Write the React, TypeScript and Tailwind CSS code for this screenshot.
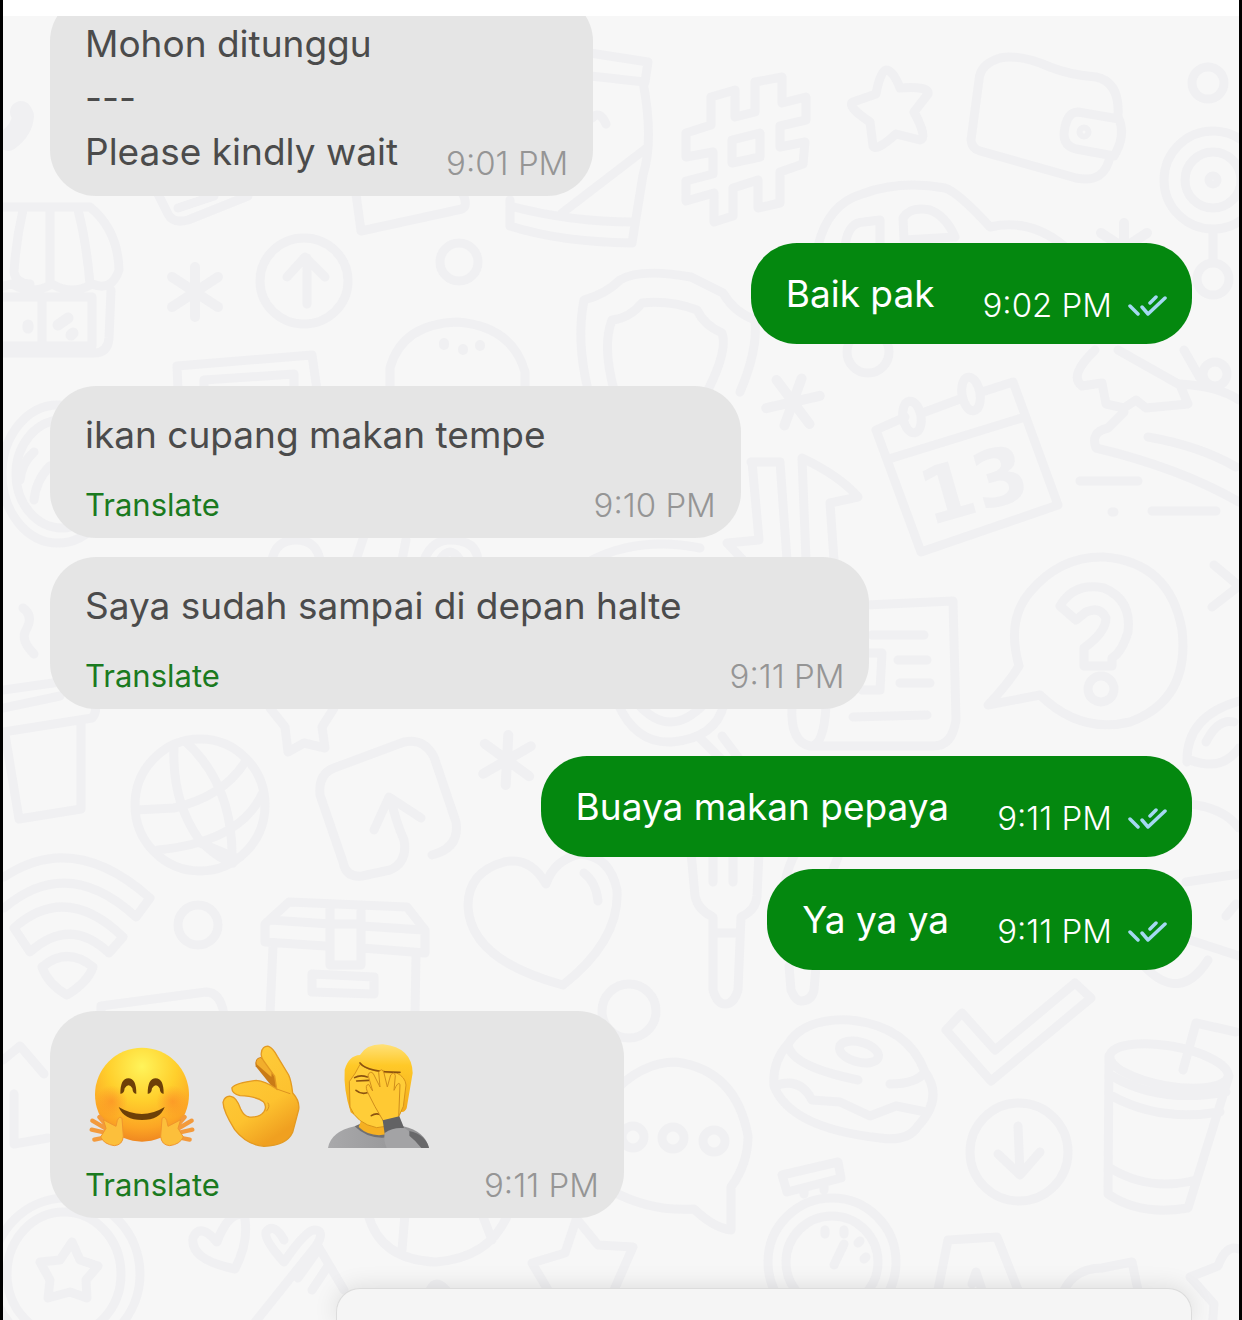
import React from 'react';
import clsx from 'clsx';

type Message = {
  id: number;
  from: 'driver' | 'me';
  lines?: string[];
  time: string;
  translate?: boolean;
  spacing: string;
};

const messages: Message[] = [
  { id: 1, from: 'driver', lines: ['Mohon ditunggu', '---', 'Please kindly wait'], time: '9:01 PM', spacing: '-mt-[21px]' },
  { id: 2, from: 'me', lines: ['Baik pak'], time: '9:02 PM', spacing: 'mt-[47px]' },
  { id: 3, from: 'driver', lines: ['ikan cupang makan tempe'], time: '9:10 PM', translate: true, spacing: 'mt-[42px]' },
  { id: 4, from: 'driver', lines: ['Saya sudah sampai di depan halte'], time: '9:11 PM', translate: true, spacing: 'mt-[19px]' },
  { id: 5, from: 'me', lines: ['Buaya makan pepaya'], time: '9:11 PM', spacing: 'mt-[47px]' },
  { id: 6, from: 'me', lines: ['Ya ya ya'], time: '9:11 PM', spacing: 'mt-3' },
  { id: 7, from: 'driver', time: '9:11 PM', translate: true, spacing: 'mt-[41px]' },
];

function Asterisk({ x, y, turn = 0 }: { x: number; y: number; turn?: number }) {
  return (
    <path
      transform={`translate(${x} ${y}) rotate(${turn})`}
      d="M0-25V25M-23-15L23 15M-23 15L23-15"
      strokeWidth="10"
    />
  );
}

function Wallpaper() {
  return (
    <svg
      aria-hidden="true"
      viewBox="0 0 1236 1304"
      preserveAspectRatio="xMinYMin slice"
      className="absolute inset-0 w-full h-full"
      fill="none"
      stroke="#f0f0f2"
      strokeWidth="9"
      strokeLinecap="round"
      strokeLinejoin="round"
    >
      <g transform="translate(-3 -16)">
        {/* Shop */}
        <path d="M3 207H90Q118 230 119 270Q112 292 92 284Q72 296 52 284Q32 296 12 284L3 286M23 210Q16 240 14 272Q16 284 30 284M50 210V284M78 210Q86 240 90 284M111 290L109 338Q108 353 94 353H3M3 297H92V346H3M42 297V346" />
        <path d="M28 325V328M58 325L68 318M71 335L73 333" strokeWidth="11" />
        <path d="M21 112L23 116Q22 130 8 140" strokeWidth="22" />

        {/* Cards and can behind the first bubble */}
        <path d="M158 194L168 214Q173 224 188 220L248 196M178 208L214 196" />
        <path d="M356 194L361 231L462 209Q468 206 463 194" />
        <path d="M590 53L648 62L645 82L590 76M643 82Q654 140 643 175L632 243Q560 242 510 226V200M510 206Q570 222 634 222M562 213L648 147M606 124Q600 110 592 118" />

        <Asterisk x={195} y={292} />
        <ellipse cx="304" cy="281" rx="44" ry="43" />
        <path d="M307 304V258M287 277L305 257L325 277" />
        <circle cx="459" cy="262" r="19" />
        <path d="M390 386V368Q402 324 457 322Q512 326 525 372V386" />
        <path d="M444 343V345M463 349V350M480 345V346" strokeWidth="10" />
        <path d="M178 390L177 366L312 355L317 390M204 390V380L294 374V390" />

        {/* Shield */}
        <path d="M588 390Q576 340 584 300Q606 294 620 280Q640 268 691 277L723 293Q734 312 755 320Q758 350 740 392" />
        <path d="M614 390Q602 345 612 320Q630 318 642 303Q670 300 697 310Q704 325 722 333Q728 350 708 390" />

        {/* Hash */}
        <path d="M711 97L735 90V117L755 112V82L782 77V103L806 97V120L780 126V147L805 142L803 164L780 172V203L758 208V180L733 188V216L714 222V193L686 201V181L713 174V152L686 157V133L711 125ZM732 140L760 133V157L732 163Z" />
        <path d="M886 70Q893 70 900 88Q930 86 928 94L914 112Q928 138 920 140L896 134Q876 152 873 146L870 122Q846 106 853 102L876 94Q880 72 886 70Z" />

        {/* Wallet */}
        <path d="M1118 116Q1120 82 1096 77Q1070 75 1050 67Q1020 54 1000 58Q980 64 979 80L971 140Q972 149 980 151L1076 178Q1105 184 1110 156" />
        <path d="M1119 119L1078 112Q1066 112 1064 134Q1064 146 1076 149L1114 156Q1126 136 1119 119Z" />
        <circle cx="1084" cy="132" r="3" />

        <circle cx="1208" cy="83" r="16" />
        <circle cx="1213" cy="180" r="49" />
        <circle cx="1213" cy="180" r="28" />
        <circle cx="1213" cy="180" r="4" />
        <path d="M1213 230V262" />
        <circle cx="1213" cy="279" r="16" />

        {/* Car */}
        <path d="M818 246Q828 204 862 194Q900 180 945 188Q958 192 990 227Q1030 218 1064 246M845 246Q848 222 864 222L880 220V246M904 240L903 218Q910 206 930 210Q946 216 955 237Z" />
        <Asterisk x={1124} y={248} />

        <circle cx="868" cy="352" r="21" />
        <Asterisk x={793} y={402} turn={20} />

        {/* Transfer arrows */}
        <path d="M751 462H780L787 560M752 462L759 540L727 543L745 562M806 560L802 458Q840 476 858 497L830 503L834 560" />

        {/* Calendar */}
        <path d="M905 417L876 430L921 552L1058 505L1013 382L985 391M925 412L960 399M892 458L1025 417" />
        <ellipse cx="912" cy="417" rx="9" ry="16" transform="rotate(-10 912 417)" />
        <ellipse cx="971" cy="394" rx="9" ry="17" transform="rotate(-10 971 394)" />
        <text
          x="974"
          y="512"
          transform="rotate(-16 974 486)"
          textAnchor="middle"
          fontSize="78"
          fontWeight="600"
          fontFamily="DejaVu Sans, sans-serif"
          fill="#f0f0f2"
          stroke="none"
        >
          13
        </text>

        {/* Dinosaur */}
        <path d="M1095 350Q1068 376 1082 386L1102 383L1106 404L1124 408L1136 400L1146 408L1188 404L1180 385L1118 350M1124 412L1108 428Q1090 432 1096 448Q1180 468 1239 502M1148 437Q1200 446 1236 467M1184 350L1200 378M1180 384Q1218 386 1239 400" />
        <circle cx="1215" cy="374" r="12" />
        <path d="M1080 481H1138M1152 511H1216M1112 512H1114" />

        {/* Question bubble */}
        <path d="M1019 666Q1006 620 1030 592Q1060 556 1104 557Q1170 562 1182 630Q1190 700 1130 722Q1080 734 1040 695L988 705Q1008 684 1019 666Z" />
        <path d="M1060 606Q1074 582 1104 588Q1132 600 1128 632Q1122 652 1112 658V666H1084V648Q1106 632 1106 618Q1100 606 1086 612L1076 620Z" />
        <circle cx="1101" cy="689" r="13" />
        <path d="M1214 565L1239 586L1212 607" />
        <path d="M1187 762Q1186 716 1239 701M1206 742Q1218 718 1234 722M1190 760Q1222 772 1239 748" />

        {/* Newspaper */}
        <path d="M866 605L953 601L956 720Q952 746 934 746H810Q790 742 792 706M826 706Q824 744 812 746M872 635H924M898 660H927M900 683H930M853 717L927 715M870 653H882L880 690H862" />
        <path d="M618 704Q636 744 672 742Q716 738 724 704M638 704Q670 740 704 704M700 738L724 762M722 736L740 760" />
        <path d="M272 560Q276 540 296 540Q316 540 320 560M356 560L364 536M402 560L406 540M424 560Q432 540 450 540Q476 540 478 560M440 560Q450 544 460 560M592 560Q640 536 700 548" />

        {/* Left edge */}
        <ellipse cx="58" cy="474" rx="56" ry="69" />
        <ellipse cx="62" cy="474" rx="46" ry="54" />
        <path d="M20 480Q22 462 34 452M34 500Q36 480 50 466" />
        <path d="M23 608Q34 616 26 630Q20 640 34 654" />
        <path d="M3 690L60 682M3 708L60 696M3 732L92 718Q98 712 94 700M5 734L19 819L81 809V722" />

        {/* Globe */}
        <ellipse cx="200" cy="805" rx="65" ry="66" />
        <path d="M174 748Q172 800 198 838Q216 858 233 863M186 742Q234 786 232 862M136 810L174 808Q224 796 245 762M158 850Q240 842 262 794M198 842L236 858" />
        <path d="M270 708L285 727L288 752L304 743L325 748L322 727L334 708" />

        <path d="M374 830L389 797L421 818M391 800Q396 822 404 840Q408 862 390 870L362 876Q346 878 343 862L320 795Q318 774 334 768L404 742Q424 738 434 757L456 822Q460 848 432 855" />
        <Asterisk x={507} y={760} turn={3} />

        {/* Wifi */}
        <path d="M4 877Q74 830 150 898L136 917Q68 854 4 908" />
        <path d="M14 928Q66 882 123 937L109 953Q70 916 30 952ZM42 967Q67 946 93 967Q88 982 67 995Q48 984 42 967Z" />
        <circle cx="198" cy="925" r="20" />

        {/* Chest */}
        <path d="M325 946L265 942V924L289 902L407 907L425 930V953L362 948M270 920L330 924M362 926L423 930M330 904V965H361V907M330 924H361M273 946L270 1014M416 955L415 1014M312 974L374 977V994L312 992Z" />
        <path d="M546 884Q530 856 504 862Q468 872 468 906Q470 960 563 985Q620 940 617 890Q610 856 580 854Q554 860 546 884ZM584 873Q596 882 598 901" />
        <path d="M101 1014V1006L206 992Q220 992 224 1014" />

        {/* Cutlery */}
        <path d="M691 852L695 896Q698 910 713 917V990Q717 1004 725 1004Q734 1004 738 990L741 917Q756 910 757 896L759 852M713 852V882M733 852V882M716 933H738" />
        <path d="M783 920Q780 880 796 852M789 966L791 990Q796 1002 802 1001Q812 1000 814 990L816 966M840 852L832 872" />
        <path d="M1190 804Q1224 808 1239 828M1186 882L1239 874M1226 916L1236 904M1190 940L1239 956M1144 966Q1180 1004 1208 960" />
        <circle cx="629" cy="1011" r="27" />

        {/* Speech bubble */}
        <path d="M610 1096Q640 1062 676 1062Q736 1070 748 1136Q748 1164 731 1187V1230Q714 1228 694 1209Q650 1212 610 1190" />
        <circle cx="633" cy="1137" r="11" />
        <circle cx="673" cy="1138" r="11" />
        <circle cx="714" cy="1141" r="11" />

        {/* Donut */}
        <path d="M788 1044Q804 1018 850 1020Q908 1026 925 1072Q944 1098 918 1126Q908 1142 880 1138Q790 1128 774 1086Q772 1062 788 1044ZM788 1044Q790 1066 858 1080M925 1072Q916 1084 890 1084M774 1086Q800 1076 812 1100L840 1102L870 1116L896 1106L926 1112" />
        <ellipse cx="859" cy="1052" rx="20" ry="10" transform="rotate(15 859 1052)" />
        <path d="M946 1030L962 1013L995 1050L1075 983L1091 998L991 1081Z" />

        <circle cx="1019" cy="1152" r="49" />
        <path d="M1018 1126L1020 1174M998 1154L1020 1175L1040 1152" />

        {/* Iced drink */}
        <path d="M1109 1056L1108 1194Q1140 1216 1188 1208L1229 1076M1112 1076Q1160 1104 1226 1092M1112 1096Q1160 1122 1220 1112M1110 1168Q1150 1192 1196 1180M1183 1070L1196 1023L1236 1032" />
        <ellipse cx="1169" cy="1066" rx="60" ry="20" transform="rotate(10 1169 1066)" />

        {/* Stopwatch */}
        <circle cx="832" cy="1262" r="64" />
        <circle cx="832" cy="1262" r="46" />
        <path d="M782 1175L838 1162L841 1178L787 1192ZM804 1194V1188M824 1190V1183M844 1244L834 1265M825 1230V1234M844 1230V1234M858 1243L860 1241M864 1259L866 1257" />

        <path d="M936 1300L948 1240L997 1237L1022 1300M972 1284L976 1272L982 1290M1060 1300Q1070 1268 1102 1268L1132 1262L1140 1300" />
        <path d="M1239 1249Q1226 1244 1218 1266L1190 1277L1214 1304L1212 1330" />
        <path d="M578 1214L565 1253L532 1263L548 1290M576 1218L598 1245L633 1247L614 1290" />
        <path d="M368 1214Q380 1260 436 1262Q490 1258 508 1214M405 1214L402 1250M482 1214L492 1240" />

        {/* Medal */}
        <ellipse cx="66" cy="1274" rx="74" ry="76" />
        <ellipse cx="64" cy="1274" rx="57" ry="62" />
        <path d="M72 1242L80 1260L98 1266L86 1280L87 1298L70 1292L48 1298L50 1280L40 1262L60 1260Z" />
        <path d="M217 1242Q200 1222 193 1238Q190 1260 235 1269Q250 1240 244 1214Q228 1212 217 1242Z" />
        <path d="M252 1326L316 1246Q326 1230 314 1230Q306 1230 284 1262Q264 1240 266 1232Q274 1222 284 1240M298 1278L318 1250M312 1290L328 1266M318 1246L344 1290" />
        <path d="M3 1060L20 1046L44 1074M14 1094V1144L48 1138M446 1290Q436 1278 430 1290" />
      </g>
    </svg>
  );
}

function HuggingFace() {
  return (
    <svg role="img" aria-label="Hugging face" viewBox="75 70 357 321" className="w-[119px] h-[107px]">
      <defs>
        <radialGradient id="hug-face" cx="0.5" cy="0.2" r="0.82">
          <stop offset="0" stopColor="#fff45a" />
          <stop offset="0.45" stopColor="#ffcf2c" />
          <stop offset="0.8" stopColor="#fca524" />
          <stop offset="1" stopColor="#ee8420" />
        </radialGradient>
        <radialGradient id="hug-cheek">
          <stop offset="0" stopColor="#fb7a25" stopOpacity="0.5" />
          <stop offset="1" stopColor="#fb7a25" stopOpacity="0" />
        </radialGradient>
      </defs>
      <circle cx="246" cy="225" r="141" fill="url(#hug-face)" />
      <circle cx="155" cy="245" r="48" fill="url(#hug-cheek)" />
      <circle cx="337" cy="245" r="48" fill="url(#hug-cheek)" />
      <path d="M181 222Q181 176 205 176Q229 176 229 222Q219 224 217 206Q206 188 194 206Q192 224 181 222Z" fill="#6d4008" />
      <path d="M263 222Q263 176 287 176Q311 176 311 222Q301 224 299 206Q288 188 276 206Q274 224 263 222Z" fill="#6d4008" />
      <path d="M176 262Q246 304 314 262Q300 301 246 301Q192 301 176 262Z" fill="#6d4008" />
      <g id="hug-hand">
        <path
          d="M143 330L97 303M140 340L95 330M142 352L103 360M148 326L118 292"
          stroke="#f39a3c"
          strokeWidth="13"
          strokeLinecap="round"
        />
        <path
          d="M122 352Q132 374 163 378Q188 376 190 350L186 296Q178 288 172 302L168 320Q148 310 130 300L138 326Z"
          fill="#fcbf3b"
          stroke="#f0952c"
          strokeWidth="3"
        />
      </g>
      <use href="#hug-hand" transform="matrix(-1 0 0 1 492 0)" />
    </svg>
  );
}

function OkHand() {
  return (
    <svg role="img" aria-label="OK hand" viewBox="432 70 357 321" className="w-[119px] h-[107px]">
      <defs>
        <linearGradient id="ok-skin" x1="0" y1="0" x2="0.5" y2="1">
          <stop offset="0" stopColor="#ffcf3f" />
          <stop offset="0.7" stopColor="#fdc22f" />
          <stop offset="1" stopColor="#f0a020" />
        </linearGradient>
      </defs>
      <path d="M640 206L587 140Q582 116 602 112L640 150L662 206Z" fill="#c97b17" />
      <path d="M634 172L590 134Q586 116 602 114L636 148Z" fill="#f2ae2c" />
      <path
        fillRule="evenodd"
        d="M604 100Q606 78 626 80Q640 86 652 110L686 166Q694 184 698 220Q720 244 716 270L698 338Q680 378 612 380Q560 376 524 330Q490 276 489 248Q494 228 512 230Q530 232 542 268Q552 290 568 292Q600 294 612 276Q622 260 610 246Q590 230 540 228Q514 222 516 204Q526 190 588 182Q616 184 650 208L644 170L610 122Q602 112 604 100Z"
        fill="url(#ok-skin)"
        stroke="#e39a22"
        strokeWidth="4"
      />
      <path d="M650 208L690 222M624 250Q632 260 620 274" fill="none" stroke="#dd9320" strokeWidth="3" strokeLinecap="round" />
    </svg>
  );
}

function Facepalm() {
  return (
    <svg role="img" aria-label="Person facepalming" viewBox="789 70 339 321" className="w-[113px] h-[107px]">
      <defs>
        <linearGradient id="palm-hair" x1="0" y1="0" x2="0" y2="1">
          <stop offset="0" stopColor="#ffe178" />
          <stop offset="0.3" stopColor="#ffc928" />
          <stop offset="1" stopColor="#f2a91b" />
        </linearGradient>
        <linearGradient id="palm-shirt" x1="0" y1="0" x2="1" y2="0">
          <stop offset="0" stopColor="#a9a9ab" />
          <stop offset="1" stopColor="#8f8f91" />
        </linearGradient>
      </defs>
      <path d="M804 385Q812 336 884 320H1030Q1096 336 1107 385Z" fill="url(#palm-shirt)" />
      <path d="M884 320Q930 366 1000 350L990 310H906Z" fill="#707072" />
      <path d="M904 300L896 322Q930 354 980 344L984 300Z" fill="#f5b022" />
      <path d="M872 278Q850 210 854 150Q866 108 900 106Q920 72 970 74Q1056 84 1058 160L1040 266Q1034 280 1020 276L880 284Z" fill="url(#palm-hair)" />
      <path d="M868 186Q888 160 900 134Q940 162 1010 160Q1036 172 1038 196L1030 260Q1010 324 950 324Q890 312 870 262Z" fill="#ffcd38" stroke="#d8941b" strokeWidth="3" />
      <path d="M900 130Q922 158 1020 158M884 174Q900 164 922 172M888 212Q904 226 926 218M934 288Q948 278 964 286M890 184L926 182" fill="none" stroke="#8c5310" strokeWidth="5" strokeLinecap="round" />
      <path
        d="M922 216Q914 196 926 194L938 214L924 166Q930 152 940 162L960 202L956 158Q966 142 972 160L982 202L992 166Q1002 154 1006 168L1002 212Q1014 184 1020 194L1018 244L1016 296L970 304Q944 262 922 216Z"
        fill="#ffc933"
        stroke="#cf8d1c"
        strokeWidth="3"
      />
      <path d="M968 302L1018 290L1032 324L974 342Z" fill="#626264" />
      <path d="M974 340Q1000 322 1034 326Q1070 346 1088 385H980Q970 364 974 340Z" fill="#a3a3a5" />
      <path d="M1048 334Q1096 344 1107 385H1084Q1066 362 1048 348Z" fill="#68686a" />
    </svg>
  );
}

function ReadTicks() {
  return (
    <svg
      role="img"
      aria-label="Read"
      viewBox="0 0 39 24"
      className="w-[39px] h-6"
      fill="none"
      stroke="#a4d8f2"
      strokeWidth="3.5"
      strokeLinecap="round"
      strokeLinejoin="round"
    >
      <path d="M2 13L10 21M14 14L20 21L37 5M22 10L28 4" />
    </svg>
  );
}

function Bubble({ message }: { message: Message }) {
  const mine = message.from === 'me';

  return (
    <li
      className={clsx(
        'flex items-end gap-12 rounded-[46px] pl-[35px] pr-[25px]',
        mine
          ? 'self-end bg-[#04880f] text-white pt-6 pb-[19px]'
          : 'self-start bg-[#e5e5e5] text-[#4b4b4b] pt-[22px] pb-[13px]',
        message.spacing
      )}
    >
      <div className={clsx('flex flex-col items-start', !message.translate && 'pb-1')}>
        {message.lines ? (
          message.lines.map((line) => (
            <p key={line} className="text-[37px] leading-[54px]">
              {line}
            </p>
          ))
        ) : (
          <div className="flex pt-2.5">
            <HuggingFace />
            <OkHand />
            <Facepalm />
          </div>
        )}
        {message.translate && (
          <button
            type="button"
            className={clsx('text-[31px] leading-10 text-[#1a7a20]', message.lines ? 'mt-[23px]' : 'mt-[15px]')}
          >
            Translate
          </button>
        )}
      </div>
      <div className="ml-auto flex items-center gap-4 whitespace-nowrap">
        <time className={clsx('text-[33px] leading-10 font-light', !mine && 'text-[#959595]')}>{message.time}</time>
        {mine && <ReadTicks />}
      </div>
    </li>
  );
}

export default function App() {
  return (
    <div className="flex min-h-screen flex-col border-x-[3px] border-black bg-white font-[Inter,sans-serif]">
      <header className="h-4 bg-white" />
      <main className="relative flex flex-1 flex-col overflow-hidden bg-[#f7f7f7]">
        <Wallpaper />
        <ul className="relative flex flex-col px-[47px]">
          {messages.map((message) => (
            <Bubble key={message.id} message={message} />
          ))}
        </ul>
        {/* Top edge of the sheet sliding in */}
        <div className="relative mt-[70px] ml-[333px] mr-[47px] min-h-8 flex-1 rounded-t-3xl border-x border-t border-[#dcdcdc] bg-[#f5f5f5] shadow-[0_0_24px_rgba(0,0,0,0.12)]" />
      </main>
    </div>
  );
}
